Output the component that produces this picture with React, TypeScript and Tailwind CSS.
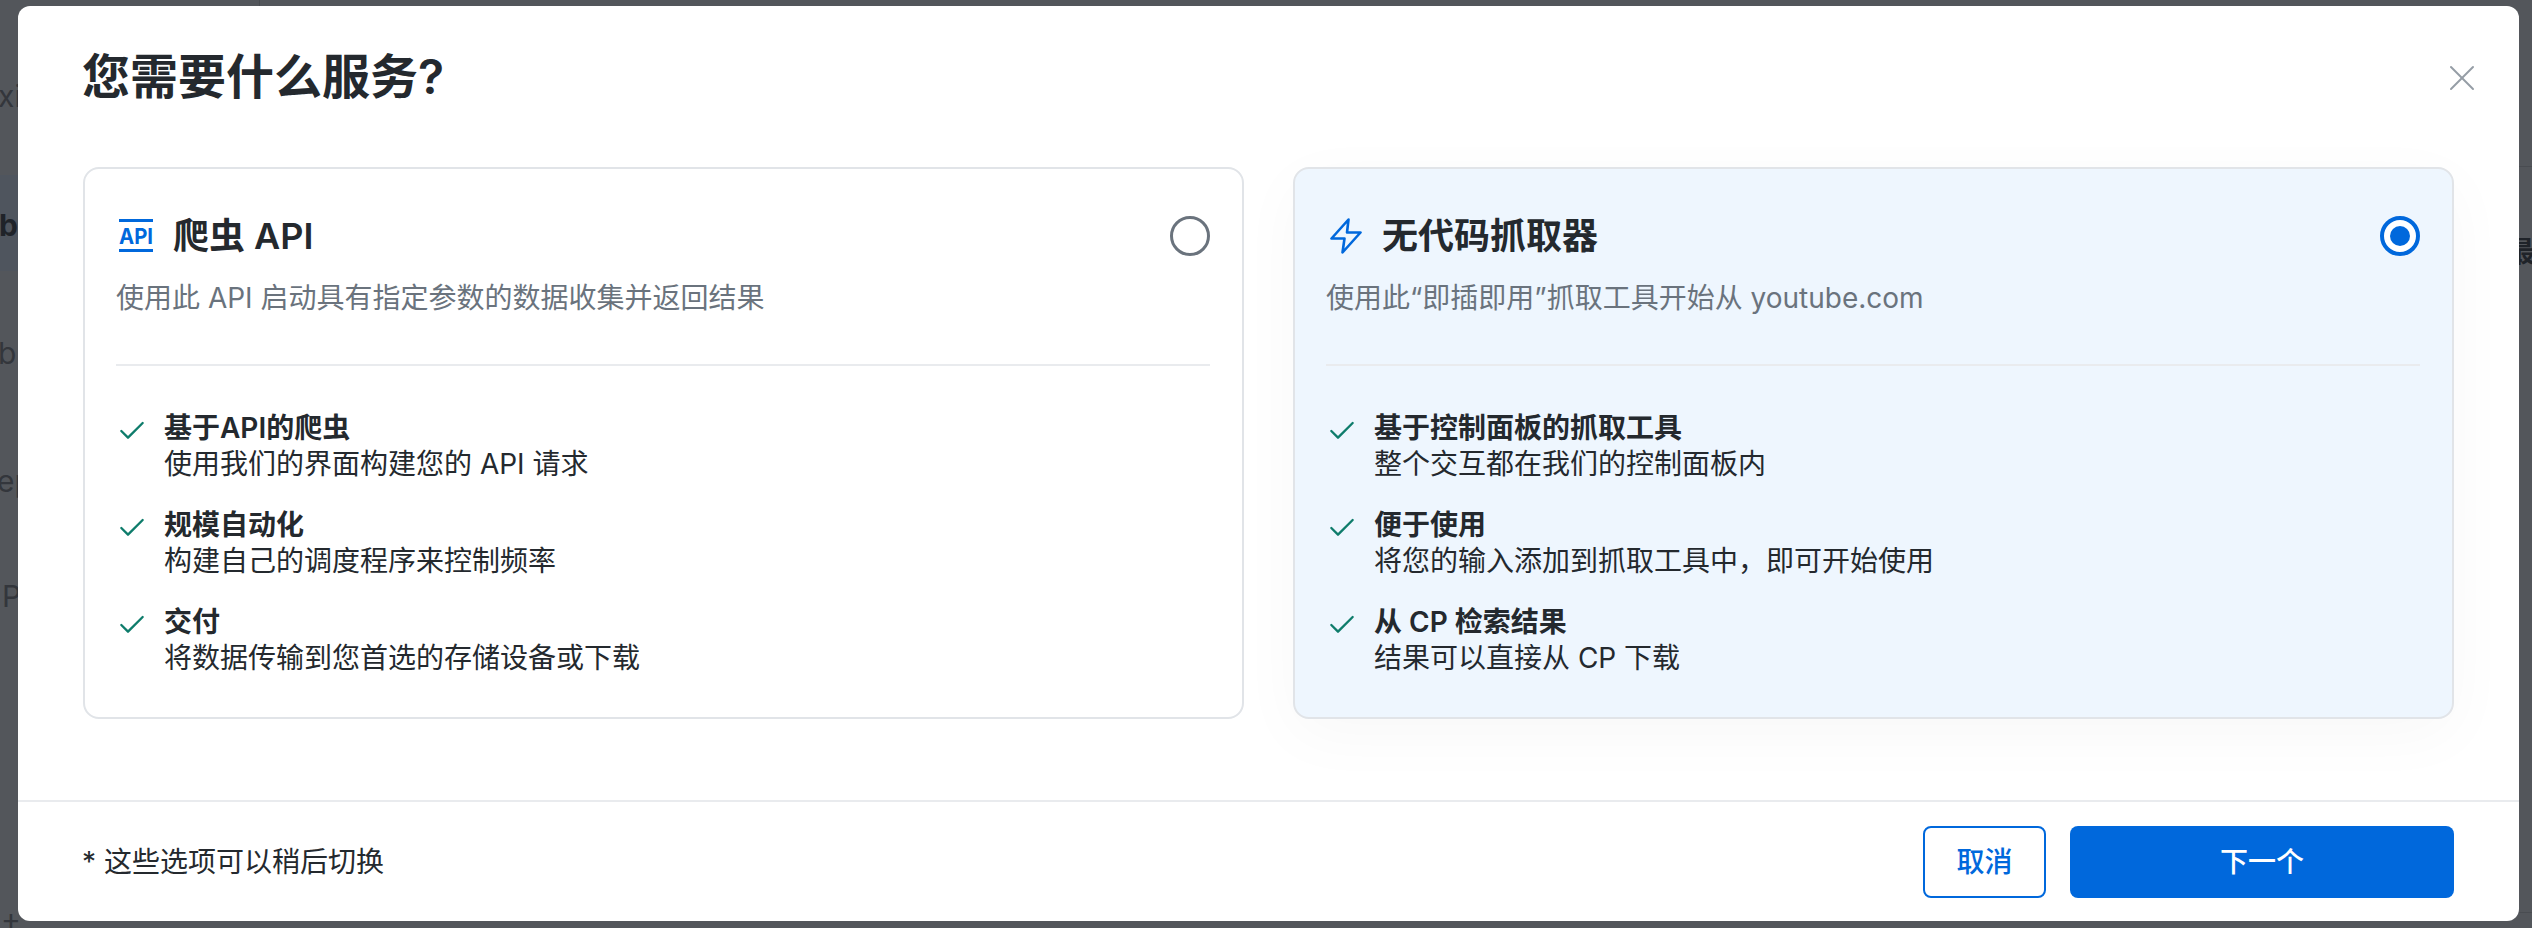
import { Check, X } from "lucide-react";

const FONT = "font-['Inter','Noto_Sans_CJK_SC',sans-serif]";

const options = [
  {
    title: "爬虫 API",
    desc: "使用此 API 启动具有指定参数的数据收集并返回结果",
    selected: false,
    features: [
      { title: "基于API的爬虫", text: "使用我们的界面构建您的 API 请求" },
      { title: "规模自动化", text: "构建自己的调度程序来控制频率" },
      { title: "交付", text: "将数据传输到您首选的存储设备或下载" },
    ],
  },
  {
    title: "无代码抓取器",
    desc: "使用此“即插即用”抓取工具开始从 youtube.com",
    selected: true,
    features: [
      { title: "基于控制面板的抓取工具", text: "整个交互都在我们的控制面板内" },
      { title: "便于使用", text: "将您的输入添加到抓取工具中，即可开始使用" },
      { title: "从 CP 检索结果", text: "结果可以直接从 CP 下载" },
    ],
  },
];

// icono API: barras arriba y abajo con el texto en medio
const ApiIcon = () => (
  <svg width="34" height="34" viewBox="0 0 34 34" className="shrink-0 ml-[3px]">
    <rect x="0" y="0" width="34" height="3" fill="#0068dc" />
    <rect x="0" y="30" width="34" height="3" fill="#0068dc" />
    <text
      x="0"
      y="25"
      fill="#0068dc"
      fontFamily="Inter, sans-serif"
      fontSize="22"
      fontWeight="700"
      textLength="34"
      lengthAdjust="spacingAndGlyphs"
    >
      API
    </text>
  </svg>
);

const BoltIcon = () => (
  <svg width="32" height="36" viewBox="0 0 32 36" fill="none" className="shrink-0 ml-[4px]">
    <path
      d="M18.5 1.5 1.5 20.5h13l-2 14 18-20h-13.5l1.5-13Z"
      stroke="#0068dc"
      strokeWidth="2.6"
      strokeLinejoin="round"
    />
  </svg>
);

const Radio = ({ selected }: { selected: boolean }) =>
  selected ? (
    <div className="w-[40px] h-[40px] rounded-full border-[4px] border-[#0068dc] bg-white flex items-center justify-center shrink-0">
      <div className="w-[20px] h-[20px] rounded-full bg-[#0068dc]" />
    </div>
  ) : (
    <div className="w-[40px] h-[40px] rounded-full border-[3px] border-[#6a737d] bg-white shrink-0" />
  );

export default function App() {
  return (
    <div className={`${FONT} relative w-[2532px] h-[928px] overflow-hidden bg-[#53565b] pt-[6px] pl-[18px]`}>
      {/* Contenido de detrás, apenas visible bajo el overlay */}
      <div className="absolute left-0 top-[175px] w-[18px] h-[96px] bg-[#4f555e]" />
      <div className="absolute left-[259px] top-0 w-[1px] h-[6px] bg-[#494c51]" />
      <div className="absolute left-[2519px] top-[166px] w-[13px] h-[1px] bg-[#494c51]" />
      <div className="absolute left-[2519px] top-[912px] w-[13px] h-[1px] bg-[#494c51]" />
      <span className="absolute left-[-2px] top-[78px] text-[30px] leading-[36px] text-[#33363c]">xi</span>
      <span className="absolute left-[-1px] top-[207px] text-[30px] leading-[36px] font-bold text-[#1f2329]">b</span>
      <span className="absolute left-[-2px] top-[335px] text-[30px] leading-[36px] text-[#33363c]">b</span>
      <span className="absolute left-[-3px] top-[463px] text-[30px] leading-[36px] text-[#33363c]">ep</span>
      <span className="absolute left-[2px] top-[578px] text-[30px] leading-[36px] text-[#33363c]">P</span>
      <span className="absolute left-[1px] top-[904px] text-[30px] leading-[30px] text-[#33363c]">+</span>
      <span className="absolute left-[2507px] top-[234px] text-[28px] leading-[36px] font-bold text-[#1f2329] whitespace-nowrap">最新</span>

      <div className="relative w-[2501px] h-[915px] bg-white rounded-[12px] flex flex-col">
        <div className="flex items-start justify-between pt-[44px] pl-[64px] pr-[34px] h-[161px]">
          <h1 className="text-[48px] leading-[56px] font-semibold text-[#24292e] -mt-[1px]">您需要什么服务?</h1>
          <X className="w-[44px] h-[44px] text-[#959da5] mt-[6px] mr-[1px]" strokeWidth={1.1} />
        </div>

        <div className="grid grid-cols-2 gap-[49px] px-[65px] h-[633px]">
          {options.map((opt) => (
            <div
              key={opt.title}
              className={
                opt.selected
                  ? "h-[552px] rounded-[16px] border-2 border-[#e1e4e8] bg-[#eef6fe] pl-[31px] pr-[32px] pt-[47px] shadow-[0_16px_64px_rgba(0,0,0,0.03)]"
                  : "h-[552px] rounded-[16px] border-2 border-[#e1e4e8] bg-white pl-[31px] pr-[32px] pt-[47px]"
              }
            >
              <div className="flex items-center h-[40px]">
                {opt.selected ? <BoltIcon /> : <ApiIcon />}
                <div className="ml-[20px] flex-1 text-[36px] leading-[40px] font-semibold text-[#24292e]">
                  {opt.title}
                </div>
                <Radio selected={opt.selected} />
              </div>
              <p className="mt-[24px] text-[28px] leading-[36px] text-[#6a737d]">{opt.desc}</p>
              <div className="mt-[48px] h-[2px] bg-[#e9ebee]" />
              <ul className="mt-[44px] flex flex-col gap-[25px]">
                {opt.features.map((f) => (
                  <li key={f.title} className="flex">
                    <Check className="w-[32px] h-[32px] mt-[5px] mr-[16px] text-[#0e7c6b] shrink-0" strokeWidth={1.75} />
                    <div className="text-[28px] leading-[36px] text-[#24292e]">
                      <div className="font-semibold">{f.title}</div>
                      <div>{f.text}</div>
                    </div>
                  </li>
                ))}
              </ul>
            </div>
          ))}
        </div>

        <div className="flex items-center justify-between border-t-2 border-[#e9ebee] pl-[64px] pr-[65px] flex-1">
          <span className="text-[28px] leading-[36px] text-[#24292e]">* 这些选项可以稍后切换</span>
          <div className="flex gap-[24px]">
            <button className="w-[123px] h-[72px] rounded-[8px] border-2 border-[#0068dc] bg-white text-[28px] font-medium text-[#0068dc]">
              取消
            </button>
            <button className="w-[384px] h-[72px] rounded-[8px] bg-[#0068dc] text-[28px] font-medium text-white">
              下一个
            </button>
          </div>
        </div>
      </div>
    </div>
  );
}
